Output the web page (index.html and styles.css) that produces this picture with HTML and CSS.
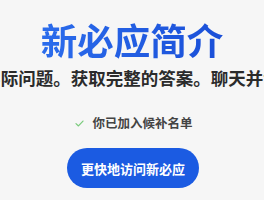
FILE: index.html
```html
<!DOCTYPE html>
<html lang="zh-CN">
<head>
<meta charset="utf-8">
<link rel="stylesheet" href="styles.css">
</head>
<body>
<main class="intro">
  <h1 class="title">新必应简介</h1>
  <p class="subtitle">提出实际问题。获取完整的答案。聊天并创作。</p>
  <div class="status">
    <svg class="check" viewBox="0 0 10 8" width="9" height="7" aria-hidden="true"><path d="M1 4.2 L3.8 6.8 L9 1.2" fill="none" stroke="#7acb7c" stroke-width="1.4" stroke-linecap="round" stroke-linejoin="round"/></svg>
    <span class="status-text">你已加入候补名单</span>
  </div>
  <button class="cta">更快地访问新必应</button>
</main>
</body>
</html>
```
FILE: styles.css
```css
html, body {
  margin: 0;
  padding: 0;
  background: #f6f6f6;
  width: 264px;
  height: 200px;
  overflow: hidden;
}
.intro {
  display: flex;
  flex-direction: column;
  align-items: center;
  font-family: "Noto Sans CJK SC", "Noto Sans", sans-serif;
  padding-top: 14px;
}
.title {
  margin: 0;
  font-size: 36.5px;
  line-height: 52px;
  font-weight: 700;
  white-space: nowrap;
  background: linear-gradient(90deg, #2b6cec 0%, #1a4fd8 100%);
  -webkit-background-clip: text;
  background-clip: text;
  color: transparent;
}
.subtitle {
  margin: 0;
  font-size: 17.5px;
  line-height: 24px;
  font-weight: 700;
  color: #2b2b2b;
  white-space: nowrap;
}
.status {
  display: flex;
  align-items: center;
  gap: 8px;
  margin-top: 24px;
  margin-left: 4px;
}
.check {
  display: block;
}
.status-text {
  font-size: 12.5px;
  line-height: 18px;
  font-weight: 700;
  color: #444;
}
.cta {
  margin-top: 16px;
  margin-left: 2px;
  border: none;
  border-radius: 20px;
  background: #1b5be2;
  color: #fff;
  font-family: inherit;
  font-size: 13px;
  font-weight: 700;
  height: 40px;
  padding: 0 13.5px;
  white-space: nowrap;
}
```
